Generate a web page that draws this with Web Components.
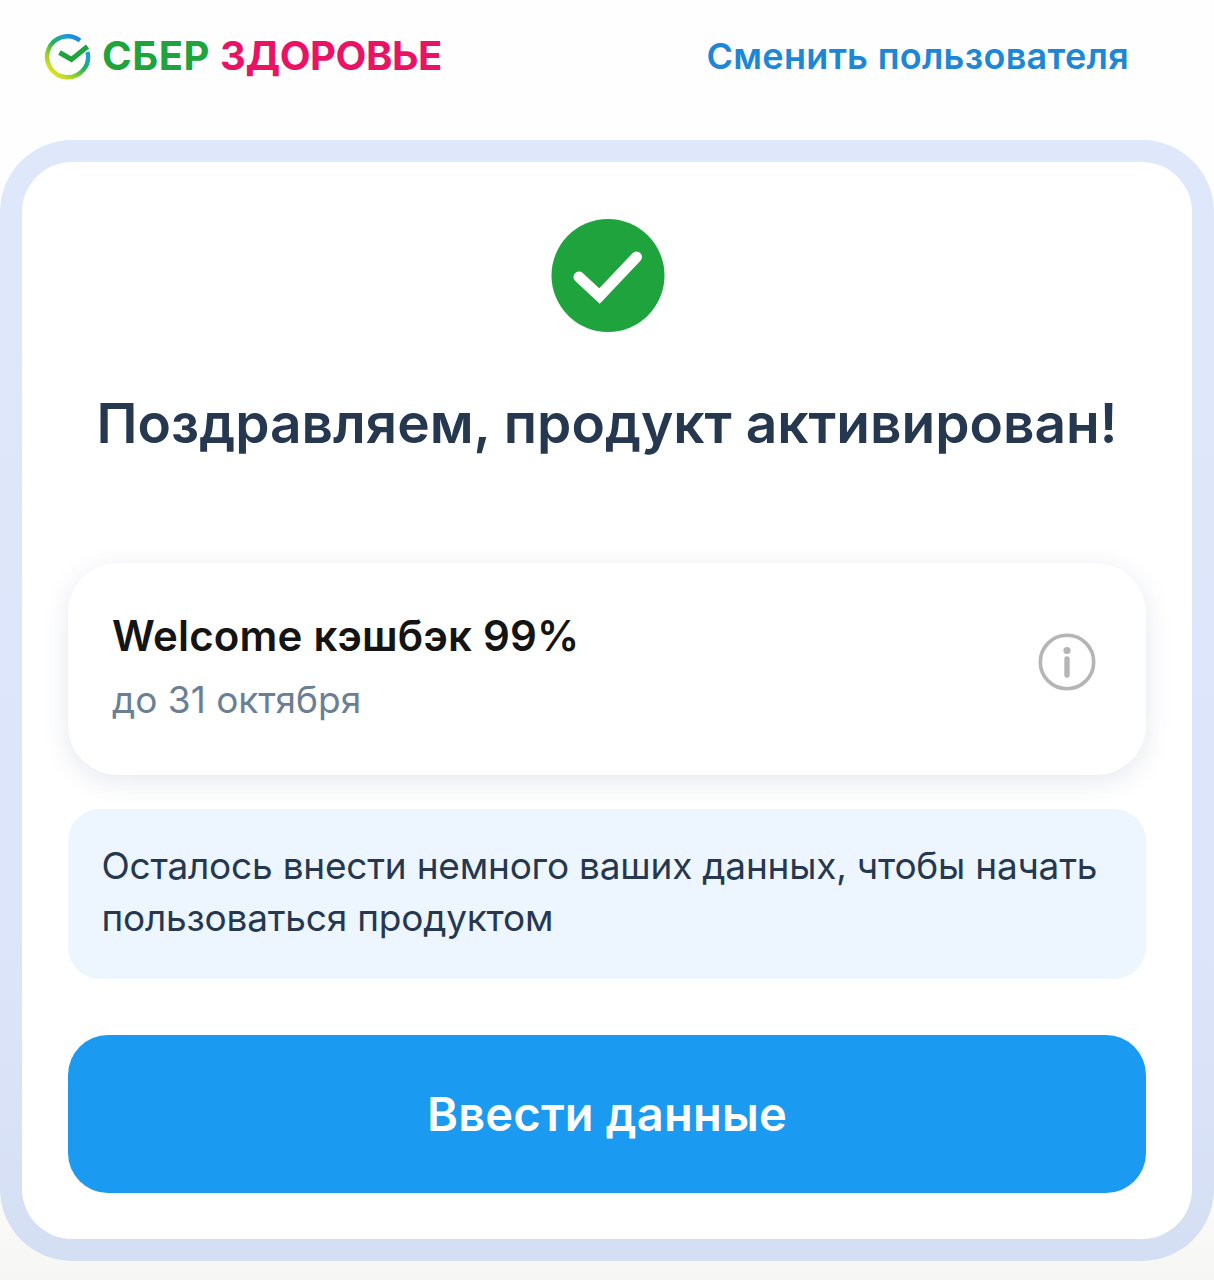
<!DOCTYPE html>
<html lang="ru">
  <head>
    <meta charset="utf-8">
    <title>Сбер Здоровье</title>
    <style>
      html, body { margin: 0; height: 1280px; overflow: hidden; }
      body {
        background: linear-gradient(#fefefe, #fdfdfd 90%, #f6f6f5);
        font-family: Inter, "Noto Sans", sans-serif;
      }
    </style>
  </head>
  <body>
    <template id="top-bar-template">
      <style>
        :host { display: flex; align-items: center; justify-content: space-between; height: 140px; padding: 0 85px 0 44px; box-sizing: border-box; }
        .logo { display: flex; align-items: center; gap: 11px; margin-top: -28px; font: 700 40px/46px Inter, sans-serif; }
        .sber { color: #1fa33d; letter-spacing: 0.6px; }
        .health { color: #ea1264; margin-left: 10px; letter-spacing: -0.45px; }
        a { color: #1b87d6; font: 600 36px/42px Inter, sans-serif; letter-spacing: 0.3px; margin-top: -28px; text-decoration: none; }
        svg { display: block; }
      </style>
      <div class="logo">
        <svg width="47" height="47" viewBox="0 0 47 47">
          <defs>
            <linearGradient id="ring" x1="0.1" y1="0.95" x2="0.85" y2="0.05">
              <stop offset="0" stop-color="#f2e71c"/>
              <stop offset="0.3" stop-color="#8fd02f"/>
              <stop offset="0.55" stop-color="#1fb25a"/>
              <stop offset="0.8" stop-color="#1c9fd8"/>
              <stop offset="1" stop-color="#1f7fe0"/>
            </linearGradient>
          </defs>
          <path d="M36 7.5A20.5 20.5 0 1 0 43.5 19" fill="none" stroke="url(#ring)" stroke-width="4.4"/>
          <path d="M15.5 19.5l12 7 16-13" fill="none" stroke="#1fa33d" stroke-width="5"/>
        </svg>
        <span><span class="sber">СБЕР</span><span class="health">ЗДОРОВЬЕ</span></span>
      </div>
      <a href="#"><slot></slot></a>
    </template>

    <template id="frame-card-template">
      <style>
        :host { display: block; padding: 22px; border-radius: 72px; background: linear-gradient(#dfe7fb, #dde5fa 70%, #d5dff3); height: 1121px; box-sizing: border-box; }
        .inner { display: flex; flex-direction: column; height: 100%; padding: 57px 46px 0; box-sizing: border-box; border-radius: 50px; background: #fff; }
      </style>
      <div class="inner"><slot></slot></div>
    </template>

    <template id="success-head-template">
      <style>
        :host { display: flex; flex-direction: column; align-items: center; margin-bottom: 105px; }
        svg { display: block; margin: 0 0 55px 2px; }
        h1 { margin: 0; color: #263850; font: 600 55px/70px Inter, sans-serif; white-space: nowrap; }
      </style>
      <svg width="114" height="114" viewBox="0 0 114 114">
        <circle cx="57" cy="56.5" r="56.5" fill="#1fa33d"/>
        <path d="M28 58l20.5 19 37-39" fill="none" stroke="#fff" stroke-width="11" stroke-linecap="round" stroke-linejoin="miter"/>
      </svg>
      <h1><slot></slot></h1>
    </template>

    <template id="bonus-card-template">
      <style>
        :host { display: flex; align-items: center; justify-content: space-between; height: 212px; padding: 0 50px 0 44px; box-sizing: border-box; border-radius: 50px; background: #fff; box-shadow: 0 6px 26px rgba(60, 80, 120, .13); margin-bottom: 34px; }
        .name { color: #141414; font: 600 42px/52px Inter, sans-serif; letter-spacing: 0.2px; margin-top: -6px; }
        .date { color: #6b7f94; font: 400 37px/46px Inter, sans-serif; margin-top: 15px; }
        svg { display: block; margin-top: -14px; }
      </style>
      <div>
        <div class="name"><slot name="name"></slot></div>
        <div class="date"><slot name="date"></slot></div>
      </div>
      <svg width="58" height="58" viewBox="0 0 58 58">
        <circle cx="29" cy="29" r="26.7" fill="none" stroke="#b5b5b5" stroke-width="3.6"/>
        <circle cx="29" cy="17.5" r="3.6" fill="#b5b5b5"/>
        <path d="M29 26v16" stroke="#b5b5b5" stroke-width="5.4" stroke-linecap="round"/>
      </svg>
    </template>

    <template id="note-box-template">
      <style>
        :host { display: block; height: 170px; padding: 31px 34px 0 33.5px; box-sizing: border-box; border-radius: 32px; background: #edf6fe; color: #263850; font: 400 37px/52px Inter, sans-serif; letter-spacing: -0.22px; margin-bottom: 56px; }
      </style>
      <slot></slot>
    </template>

    <template id="action-button-template">
      <style>
        :host { display: block; }
        button { display: block; width: 100%; height: 158px; border: 0; border-radius: 40px; background: #1a9af1; color: #fff; font: 600 47px/56px Inter, sans-serif; letter-spacing: 0.2px; padding: 0; }
      </style>
      <button><slot></slot></button>
    </template>

    <top-bar>Сменить пользователя</top-bar>
    <frame-card>
      <success-head>Поздравляем, продукт активирован!</success-head>
      <bonus-card>
        <span slot="name">Welcome кэшбэк 99%</span>
        <span slot="date">до 31 октября</span>
      </bonus-card>
      <note-box>Осталось внести немного ваших данных, чтобы начать пользоваться продуктом</note-box>
      <action-button>Ввести данные</action-button>
    </frame-card>

    <script>
    for (const name of ['top-bar', 'frame-card', 'success-head', 'bonus-card', 'note-box', 'action-button']) {
      const template = document.getElementById(name + '-template').content;
      customElements.define(name, class extends HTMLElement {
        constructor() {
          super();
          this.attachShadow({mode: 'open'}).appendChild(template.cloneNode(true));
        }
      });
    }
    </script>
  </body>
</html>
